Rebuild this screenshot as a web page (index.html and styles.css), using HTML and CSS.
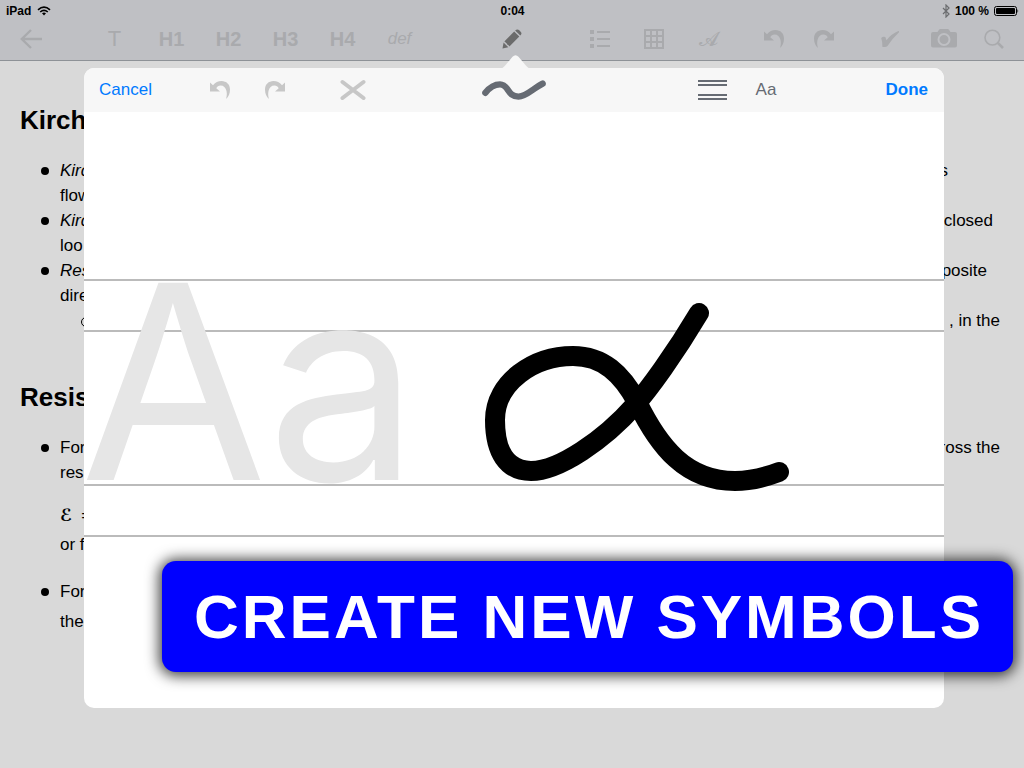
FILE: index.html
```html
<!DOCTYPE html>
<html lang="en">
<head>
    <meta charset="UTF-8">
    <meta name="viewport" content="width=device-width, initial-scale=1.0">
    <title>Notes</title>
    <link rel="stylesheet" href="styles.css">
</head>
<body>
    <svg class="sprite" aria-hidden="true">
        <symbol id="icon-undo" viewBox="0 0 20 18">
            <path d="M0 1.5 L3 4.2 C5.5 1.2 8 0 11.5 0 C16.5 0 20 3.5 20 8.5 C20 12.5 18.5 16 16 18 C17 15 17 12.5 16.5 10 C15.8 6.5 13.5 4.5 10.5 4.5 C8.5 4.5 7.2 5.5 6.3 7.2 L10 10.5 H0 Z"/>
        </symbol>
        <symbol id="icon-redo" viewBox="0 0 20 18">
            <use href="#icon-undo" width="20" height="18" transform="translate(20 0) scale(-1 1)"/>
        </symbol>
    </svg>

    <header class="top">
        <div class="status">
            <div class="status-left">
                <span>iPad</span>
                <svg width="14" height="10" viewBox="0 0 14 10" fill="none" stroke="#000" stroke-width="1.6">
                    <path d="M1 3.8 Q7 -1.6 13 3.8"/>
                    <path d="M3.2 6 Q7 2.6 10.8 6"/>
                    <path d="M5 7.3 Q7 5.8 9 7.3 L7 9.6 Z" fill="#000" stroke="none"/>
                </svg>
            </div>
            <span>0:04</span>
            <div class="status-right">
                <svg width="8" height="14" viewBox="0 0 8 14" fill="none" stroke="#6c6d70" stroke-width="1.2">
                    <path d="M1 4 L7 10 L4 13 V1 L7 4 L1 10"/>
                </svg>
                <span>100 %</span>
                <svg width="25" height="10" viewBox="0 0 25 10">
                    <rect x="0.5" y="0.5" width="22" height="9" rx="2" fill="none" stroke="#000"/>
                    <rect x="2" y="2" width="19" height="6" rx="1"/>
                    <path d="M23.5 3 Q25 5 23.5 7 Z"/>
                </svg>
            </div>
        </div>

        <nav class="toolbar">
            <div class="group back">
                <button aria-label="Back">
                    <svg width="22" height="20" viewBox="0 0 22 20" fill="none" stroke="currentColor" stroke-width="2.4"><path d="M22 10 H1.5 M11 1 L1.8 10 L11 19"/></svg>
                </button>
            </div>
            <div class="group headings">
                <button class="plain">T</button>
                <button>H1</button>
                <button>H2</button>
                <button>H3</button>
                <button>H4</button>
                <button class="def">def</button>
            </div>
            <div class="group pencil">
                <button aria-label="Draw">
                    <svg width="20" height="20" viewBox="0 0 20 20" fill="currentColor">
                        <path d="M0.5 19.5 L1.6 13.6 L6.3 18.3 Z"/>
                        <path d="M2.3 12.4 L12.2 2.5 L17.3 7.6 L7.4 17.5 Q6.8 15.8 5.4 15.7 Q5.2 14 3.9 13.9 Q3.7 12.6 2.3 12.4 Z"/>
                        <path d="M13.1 1.6 Q15 -0.3 17 1 L18.9 2.9 Q20.2 4.7 18.3 6.6 Z"/>
                    </svg>
                </button>
            </div>
            <div class="group insert">
                <button aria-label="List">
                    <svg width="20" height="18" viewBox="0 0 20 18" fill="currentColor">
                        <path d="M0 0H4V4H0Z M0 7H4V11H0Z M0 14H4V18H0Z M7 1H20V3H7Z M7 8H20V10H7Z M7 15H20V17H7Z"/>
                    </svg>
                </button>
                <button aria-label="Table">
                    <svg width="20" height="20" viewBox="0 0 20 20" fill="none" stroke="currentColor" stroke-width="2">
                        <path d="M1 1H19V19H1Z M7 1V19 M13 1V19 M1 7H19 M1 13H19"/>
                    </svg>
                </button>
                <button class="script">𝓐</button>
            </div>
            <div class="group history">
                <button aria-label="Undo"><svg width="20" height="18" fill="currentColor"><use href="#icon-undo"/></svg></button>
                <button aria-label="Redo"><svg width="20" height="18" fill="currentColor"><use href="#icon-redo"/></svg></button>
            </div>
            <div class="group extra">
                <button aria-label="Check">
                    <svg width="18" height="16" viewBox="0 0 18 16" fill="currentColor"><path d="M0.2 7 Q2 5 4.3 6 L5.5 9.2 Q10 3 17.5 0 Q18.5 0.2 18 1.3 Q11 8 6.5 15 Q4 16.6 1.3 15.8 Q1.5 11 0.2 7 Z"/></svg>
                </button>
                <button aria-label="Camera">
                    <svg width="26" height="20" viewBox="0 0 26 20" fill="currentColor" fill-rule="evenodd">
                        <path d="M2 3 H6.5 L8 0.8 Q8.5 0 9.5 0 H16.5 Q17.5 0 18 0.8 L19.5 3 H24 Q26 3 26 5 V16.5 Q26 18.5 24 18.5 H2 Q0 18.5 0 16.5 V5 Q0 3 2 3 Z M13 4 A6.5 6.5 0 1 0 13 17 A6.5 6.5 0 1 0 13 4 Z M13 6 A4.5 4.5 0 1 1 13 15 A4.5 4.5 0 1 1 13 6 Z"/>
                    </svg>
                </button>
                <button class="search" aria-label="Search">
                    <svg width="20" height="20" viewBox="0 0 20 20" fill="none" stroke="currentColor" stroke-width="1.6"><circle cx="8.4" cy="8.6" r="7.4"/><path d="M13.8 13.8 L19 19" stroke-width="2.6"/></svg>
                </button>
            </div>
        </nav>
    </header>

    <main class="note">
        <h2>Kirch</h2>
        <ul>
            <li>
                <div>
                    <p class="line end-far"><em>Kirc</em><span>s</span></p>
                    <p class="line">flow</p>
                </div>
            </li>
            <li>
                <div>
                    <p class="line end-near"><em>Kirc</em><span>closed</span></p>
                    <p class="line">loo</p>
                </div>
            </li>
            <li>
                <div>
                    <p class="line end-mid"><em>Res</em><span>posite</span></p>
                    <p class="line">dire</p>
                    <ul>
                        <li class="circle"><p class="line end"><span>, in the</span></p></li>
                    </ul>
                </div>
            </li>
        </ul>

        <h2>Resis</h2>
        <ul>
            <li>
                <div>
                    <p class="line"><span>For</span><span>ross the</span></p>
                    <p class="line">resi</p>
                    <p class="line equation"><span><span class="emf">ℰ</span> =</span></p>
                    <p class="line">or f</p>
                </div>
            </li>
            <li class="tall">
                <div>
                    <p class="line">For</p>
                    <p class="line">the</p>
                </div>
            </li>
        </ul>
    </main>

    <section class="popover">
        <svg class="arrow" width="36" height="14" viewBox="0 0 36 14"><path d="M0 14 C4 14 6 12 8 9.5 L14.5 1.8 Q17.5 -1.2 20.5 1.8 L27 9.5 C29 12 31 14 35 14 Z" fill="#f7f7f7"/></svg>

        <div class="popover-bar">
            <button class="cancel">Cancel</button>
            <button class="muted" aria-label="Undo stroke"><svg width="20" height="18" fill="currentColor"><use href="#icon-undo"/></svg></button>
            <button class="muted" aria-label="Redo stroke"><svg width="20" height="18" fill="currentColor"><use href="#icon-redo"/></svg></button>
            <button class="muted" aria-label="Clear">
                <svg width="26" height="22" viewBox="0 0 26 22" fill="none" stroke="currentColor" stroke-width="4" stroke-linecap="round"><path d="M2.5 3 L23.5 19 M23.5 3 L2.5 19"/></svg>
            </button>
            <button aria-label="Pen">
                <svg width="64" height="20" viewBox="0 0 64 20" fill="none" stroke="currentColor" stroke-width="6.4" stroke-linecap="round"><path d="M3.4 12.8 C8 7 13 4.4 18 4.4 C27 4.4 25 16.6 36.5 16.6 C42 16.6 48 11.8 52 9 C55 6.8 58 5 60.6 3.6"/></svg>
            </button>
            <div class="guides">
                <button aria-label="Guide lines">
                    <svg width="29" height="20" viewBox="0 0 29 20" fill="currentColor"><path d="M0 0H29V2H0Z M0 4H29V6H0Z M0 14H29V16H0Z M0 18H29V20H0Z"/></svg>
                </button>
                <button>Aa</button>
            </div>
            <button class="done">Done</button>
        </div>

        <svg class="canvas">
            <g stroke="#bbb" stroke-width="2">
                <line x1="0" x2="100%" y1="168" y2="168"/>
                <line x1="0" x2="100%" y1="219" y2="219"/>
                <line x1="0" x2="100%" y1="373" y2="373"/>
                <line x1="0" x2="100%" y1="424" y2="424"/>
            </g>
            <text class="sample" x="-4" y="368">Aa</text>
            <path d="M615 201 C590 243 565 277 551 293 C520 328 475 359 447 359 C423 359 411 340 411 308 C411 270 450 244 489 244 C519 244 538 262 553 290 C575 335 602 369 651 369 C667 369 682 365 695 360" fill="none" stroke="#000" stroke-width="20" stroke-linecap="round"/>
        </svg>
    </section>

    <div class="banner">CREATE NEW SYMBOLS</div>
</body>
</html>
```
FILE: styles.css
```css
* {
    box-sizing: border-box;
    margin: 0;
    padding: 0;
}

body {
    position: relative;
    min-height: 100vh;
    overflow: hidden;
    background: #d9d9d9;
    color: #000;
    font-family: "Liberation Sans", Arial, sans-serif;
    font-size: 17px;
}

.sprite {
    position: absolute;
    width: 0;
    height: 0;
}

svg {
    display: block;
    flex: none;
}

button {
    display: flex;
    align-items: center;
    justify-content: center;
    border: none;
    background: none;
    color: inherit;
    font: inherit;
}

/* status bar and toolbar */
.top {
    background: #bfc0c4;
    border-bottom: 1px solid #8e9297;
}

.status {
    display: grid;
    grid-template-columns: 1fr auto 1fr;
    align-items: center;
    height: 20px;
    padding: 2px 5px 0 6px;
    font-size: 12px;
    font-weight: bold;
}

.status-left, .status-right {
    display: flex;
    align-items: center;
    gap: 6px;
}

.status-right {
    justify-content: flex-end;
    gap: 5px;
}

.toolbar {
    display: grid;
    grid-template-columns: 86fr 342fr 145fr 176fr 114fr 161fr;
    height: 40px;
    padding-bottom: 2px;
    color: #a9aaad;
    font-size: 20px;
    font-weight: bold;
}

.group {
    display: flex;
}

.group button {
    width: 54px;
}

.back button {
    width: 62px;
}

.headings button {
    width: 57px;
}

.headings .plain {
    font-size: 22px;
    font-weight: normal;
}

.headings .def {
    font-size: 17px;
    font-style: italic;
    font-weight: normal;
}

.pencil {
    padding-left: 57px;
    color: #6b6b6b;
}

.insert .script {
    font-family: "DejaVu Serif", "Liberation Serif", serif;
    font-size: 20px;
    font-weight: normal;
}

.history button {
    width: 50px;
}

.extra .search {
    width: 46px;
}

/* document */
.note {
    padding: 44px 24px 0 20px;
    line-height: 25px;
}

.note h2 {
    margin-bottom: 23px;
    font-size: 26px;
    line-height: 30px;
}

.note ul {
    padding-left: 21px;
    list-style: none;
}

.note ul + h2 {
    margin-top: 49px;
}

.note li {
    display: grid;
    grid-template-columns: 19px 1fr;
}

.note li::before {
    content: "";
    width: 8px;
    height: 8px;
    margin-top: 9px;
    border-radius: 50%;
    background: #000;
}

.note .circle::before {
    border: 1px solid #000;
    background: none;
}

.line {
    display: flex;
    justify-content: space-between;
}

.end {
    justify-content: flex-end;
}

.end-near {
    padding-right: 7px;
}

.end-mid {
    padding-right: 13px;
}

.end-far {
    padding-right: 52px;
}

.equation {
    height: 47px;
    padding-top: 13px;
    line-height: 34px;
}

.emf {
    margin-right: 4px;
    font-family: "DejaVu Sans", sans-serif;
    font-weight: bold;
}

.note .tall {
    margin-top: 20px;
    line-height: 30px;
}

.note .tall::before {
    margin-top: 11px;
}

/* drawing popover */
.popover {
    position: absolute;
    top: 68px;
    right: 80px;
    bottom: 60px;
    left: 84px;
    display: flex;
    flex-direction: column;
    border-radius: 10px;
    background: #fff;
}

.arrow {
    position: absolute;
    top: -13px;
    left: 50%;
    margin-left: -16px;
}

.popover-bar {
    display: grid;
    grid-template-columns: 108fr 55fr 55fr 101fr 222fr 168fr 151fr;
    height: 44px;
    border-radius: 10px 10px 0 0;
    background: #f7f7f7;
    color: #666b73;
}

.popover-bar .cancel {
    justify-content: flex-start;
    padding-left: 15px;
    color: #007aff;
}

.popover-bar .done {
    justify-content: flex-end;
    padding-right: 16px;
    color: #007aff;
    font-weight: bold;
}

.popover-bar .muted {
    color: #c7c7c7;
}

.guides {
    display: flex;
    justify-content: flex-end;
}

.guides button {
    width: 54px;
}

.canvas {
    flex: 1;
    width: 100%;
    min-height: 0;
}

.sample {
    fill: #e6e6e6;
    font-family: Inter, "Liberation Sans", sans-serif;
    font-size: 271px;
}

/* caption over everything */
.banner {
    position: absolute;
    right: 11px;
    bottom: 96px;
    padding: 20px 29px 20px 32px;
    border-radius: 14px;
    background: #00f;
    box-shadow: 0 1px 14px 3px rgba(0, 0, 0, 0.75);
    color: #fff;
    font-size: 62px;
    font-weight: bold;
    letter-spacing: 3px;
    line-height: 71px;
    white-space: nowrap;
}
```
